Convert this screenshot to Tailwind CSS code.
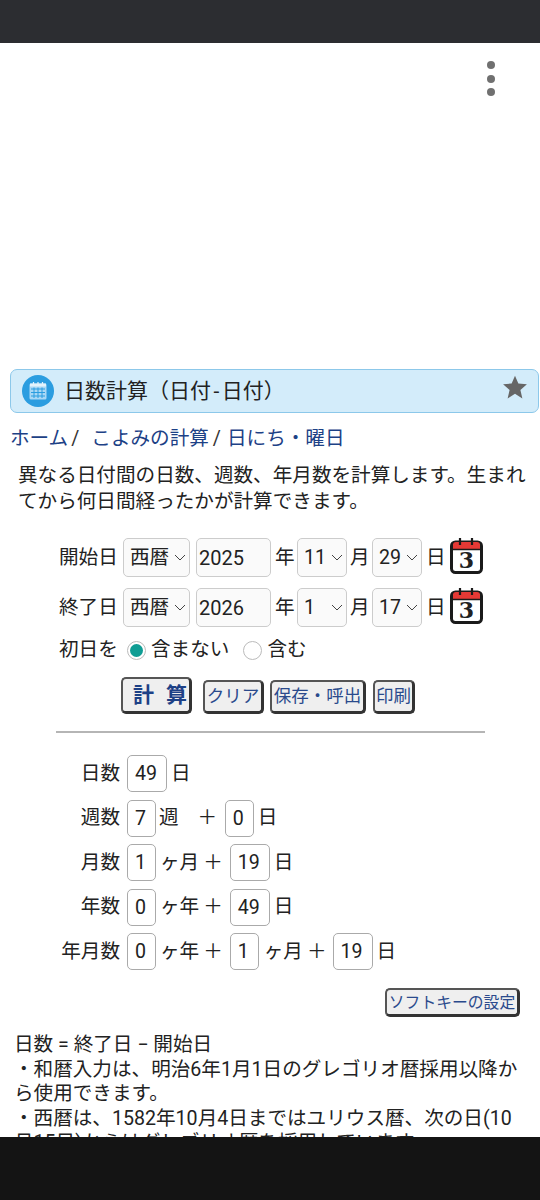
<!DOCTYPE html>
<html lang="ja">
<head>
    <meta charset="UTF-8">
    <meta name="viewport" content="width=device-width, initial-scale=1.0">
    <title>日数計算（日付-日付）</title>
    <script src="https://cdn.jsdelivr.net/npm/@tailwindcss/browser@4"></script>
</head>
<body class="bg-white w-[540px] h-[1200px] overflow-hidden flex flex-col text-[19.600px] text-[#222] font-['Roboto','Noto_Sans_CJK_JP',sans-serif]">
    <!-- status bar -->
    <div class="h-[43px] shrink-0 bg-[#2c2d31]"></div>

    <div class="flex-1 min-h-0 overflow-hidden">
        <!-- ad slot -->
        <div class="h-[326px] flex justify-end pt-[18px] pr-[45px]">
            <div class="flex flex-col gap-[5.500px]">
                <span class="w-[8px] h-[8px] rounded-full bg-[#707070]"></span>
                <span class="w-[8px] h-[8px] rounded-full bg-[#707070]"></span>
                <span class="w-[8px] h-[8px] rounded-full bg-[#707070]"></span>
            </div>
        </div>

        <!-- title -->
        <div class="ml-[10px] w-[529px] h-[44px] rounded-[7px] border border-[#8cc8ea] bg-[#d3ecfa] flex items-center pl-[11px] pr-[10px]">
            <svg class="w-[32px] h-[32px] shrink-0" viewBox="0 0 32 32">
                <circle cx="16" cy="16" r="16" fill="#2b9de0"/>
                <rect x="7.500" y="8.500" width="17" height="16" rx="1.500" fill="#a9d8f5"/>
                <rect x="8" y="8.500" width="16" height="3" fill="#e3f3fc"/>
                <path d="M11.500 7v3M16 7v3M20.500 7v3" stroke="#e3f3fc" stroke-width="1.200"/>
                <path d="M9 14h14M9 17.500h14M9 21h14M12 12.500v10.500M16 12.500v10.500M20 12.500v10.500" stroke="#2b9de0" stroke-width="1"/>
            </svg>
            <h1 class="ml-[10px] text-[21px] leading-none text-[#222] whitespace-nowrap">日数計算（日付<span class="px-[2.500px]">-</span>日付）</h1>
            <svg class="ml-auto w-[26px] h-[26px] mb-[9px]" viewBox="0 0 24 24">
                <path d="M12 1.500l3.100 7.300 7.900.7-6 5.200 1.800 7.800L12 18.300l-6.800 4.200L7 14.700 1 9.500l7.900-.7z" fill="#666"/>
            </svg>
        </div>

        <!-- breadcrumb -->
        <nav class="mt-[13px] ml-[10px] h-[26px] leading-[26px] text-[#1d4186] whitespace-nowrap">ホーム<span class="text-[#333] ml-[3px]">/</span><span class="ml-[12px]">こよみの計算</span><span class="text-[#333] ml-[4px]">/</span><span class="ml-[6px]">日にち・曜日</span></nav>

        <p class="mt-[11px] ml-[18px] w-[515px] leading-[26px]">異なる日付間の日数、週数、年月数を計算します。生まれてから何日間経ったかが計算できます。</p>

        <!-- date form -->
        <form class="mt-[23px] ml-[59px]">
            <div class="flex items-center h-[39px]">
                <span class="w-[64px]">開始日</span>
                <div class="relative">
                    <select class="appearance-none w-[67px] h-[39px] pl-[6px] rounded-[5px] border border-[#ccc] bg-[#fafafa]"><option>西暦</option></select>
                    <svg class="absolute right-[4px] top-[16px] w-[12px] h-[7px] pointer-events-none" viewBox="0 0 12 7" fill="none" stroke="#444" stroke-width="1"><path d="M1 1l5 5 5-5"/></svg>
                </div>
                <input class="ml-[6px] w-[75px] h-[39px] pl-[2px] text-[20px] rounded-[5px] border border-[#ccc] bg-[#fafafa]" value="2025">
                <span class="ml-[4px] w-[22px]">年</span>
                <div class="relative">
                    <select class="appearance-none w-[50px] h-[39px] pl-[6px] rounded-[5px] border border-[#ccc] bg-[#fafafa]"><option>11</option></select>
                    <svg class="absolute right-[4px] top-[16px] w-[12px] h-[7px] pointer-events-none" viewBox="0 0 12 7" fill="none" stroke="#444" stroke-width="1"><path d="M1 1l5 5 5-5"/></svg>
                </div>
                <span class="ml-[3px] w-[22px]">月</span>
                <div class="relative">
                    <select class="appearance-none w-[50px] h-[39px] pl-[6px] rounded-[5px] border border-[#ccc] bg-[#fafafa]"><option>29</option></select>
                    <svg class="absolute right-[4px] top-[16px] w-[12px] h-[7px] pointer-events-none" viewBox="0 0 12 7" fill="none" stroke="#444" stroke-width="1"><path d="M1 1l5 5 5-5"/></svg>
                </div>
                <span class="ml-[4px] w-[24px]">日</span>
                <svg class="w-[33px] h-[36px] mb-[4px]" viewBox="0 0 33 36">
                    <rect x="1.500" y="4" width="30" height="30.500" rx="4" fill="#fff" stroke="#1a1a1a" stroke-width="3"/>
                    <path d="M3 11V7a3 3 0 0 1 3-3h21a3 3 0 0 1 3 3v4z" fill="#e53935"/>
                    <path d="M3 11.500h27" stroke="#1a1a1a" stroke-width="1.500"/>
                    <path d="M10 0v7M22 0v7" stroke="#1a1a1a" stroke-width="2.200"/>
                    <text x="16.500" y="30" text-anchor="middle" font-family="'DejaVu Serif',serif" font-weight="700" font-size="22" fill="#222">3</text>
                </svg>
            </div>
            <div class="flex items-center h-[39px] mt-[11px]">
                <span class="w-[64px]">終了日</span>
                <div class="relative">
                    <select class="appearance-none w-[67px] h-[39px] pl-[6px] rounded-[5px] border border-[#ccc] bg-[#fafafa]"><option>西暦</option></select>
                    <svg class="absolute right-[4px] top-[16px] w-[12px] h-[7px] pointer-events-none" viewBox="0 0 12 7" fill="none" stroke="#444" stroke-width="1"><path d="M1 1l5 5 5-5"/></svg>
                </div>
                <input class="ml-[6px] w-[75px] h-[39px] pl-[2px] text-[20px] rounded-[5px] border border-[#ccc] bg-[#fafafa]" value="2026">
                <span class="ml-[4px] w-[22px]">年</span>
                <div class="relative">
                    <select class="appearance-none w-[50px] h-[39px] pl-[6px] rounded-[5px] border border-[#ccc] bg-[#fafafa]"><option>1</option></select>
                    <svg class="absolute right-[4px] top-[16px] w-[12px] h-[7px] pointer-events-none" viewBox="0 0 12 7" fill="none" stroke="#444" stroke-width="1"><path d="M1 1l5 5 5-5"/></svg>
                </div>
                <span class="ml-[3px] w-[22px]">月</span>
                <div class="relative">
                    <select class="appearance-none w-[50px] h-[39px] pl-[6px] rounded-[5px] border border-[#ccc] bg-[#fafafa]"><option>17</option></select>
                    <svg class="absolute right-[4px] top-[16px] w-[12px] h-[7px] pointer-events-none" viewBox="0 0 12 7" fill="none" stroke="#444" stroke-width="1"><path d="M1 1l5 5 5-5"/></svg>
                </div>
                <span class="ml-[4px] w-[24px]">日</span>
                <svg class="w-[33px] h-[36px] mb-[4px]" viewBox="0 0 33 36">
                    <rect x="1.500" y="4" width="30" height="30.500" rx="4" fill="#fff" stroke="#1a1a1a" stroke-width="3"/>
                    <path d="M3 11V7a3 3 0 0 1 3-3h21a3 3 0 0 1 3 3v4z" fill="#e53935"/>
                    <path d="M3 11.500h27" stroke="#1a1a1a" stroke-width="1.500"/>
                    <path d="M10 0v7M22 0v7" stroke="#1a1a1a" stroke-width="2.200"/>
                    <text x="16.500" y="30" text-anchor="middle" font-family="'DejaVu Serif',serif" font-weight="700" font-size="22" fill="#222">3</text>
                </svg>
            </div>
            <!-- radios -->
            <div class="flex items-center h-[24px] mt-[11px]">
                <span class="w-[68px]">初日を</span>
                <span class="w-[19px] h-[19px] rounded-full border border-[#bbb] flex items-center justify-center"><span class="w-[13px] h-[13px] rounded-full bg-[#0f9d94]"></span></span>
                <span class="ml-[5px]">含まない</span>
                <span class="ml-[14px] w-[19px] h-[19px] rounded-full border border-[#bbb]"></span>
                <span class="ml-[5px]">含む</span>
            </div>
            <!-- buttons -->
            <div class="flex items-end mt-[15px] ml-[62px]">
                <button type="button" class="w-[71px] h-[37px] pl-[10px] rounded-[5px] border-2 border-[#555] border-r-[3px] border-b-[3px] border-r-[#333] border-b-[#333] bg-[#efefef] text-[#1d4186] font-bold text-[21px] tracking-[12px] leading-none whitespace-nowrap">計算</button>
                <button type="button" class="ml-[11px] w-[61px] h-[34px] pt-[1px] rounded-[5px] border-2 border-[#555] border-r-[3px] border-b-[3px] border-r-[#333] border-b-[#333] bg-[#efefef] text-[#2a4a8c] text-[17.500px] leading-none whitespace-nowrap">クリア</button>
                <button type="button" class="ml-[6px] w-[96px] h-[34px] pt-[1px] rounded-[5px] border-2 border-[#555] border-r-[3px] border-b-[3px] border-r-[#333] border-b-[#333] bg-[#efefef] text-[#2a4a8c] text-[17.500px] leading-none whitespace-nowrap">保存・呼出</button>
                <button type="button" class="ml-[7px] w-[42px] h-[34px] pt-[1px] rounded-[5px] border-2 border-[#555] border-r-[3px] border-b-[3px] border-r-[#333] border-b-[#333] bg-[#efefef] text-[#2a4a8c] text-[17.500px] leading-none whitespace-nowrap">印刷</button>
            </div>
        </form>

        <hr class="mt-[17px] ml-[56px] w-[429px] border-t-2 border-[#b5b5b5]">

        <!-- results -->
        <div class="mt-[22px] flex flex-col gap-[7.500px] whitespace-nowrap">
            <div class="flex items-center h-[37px]">
                <span class="w-[120px] text-right">日数</span>
                <span class="ml-[7px] w-[40px] h-[37px] pl-[7px] leading-[35px] rounded-[5px] border border-[#aaa]">49</span>
                <span class="ml-[4px]">日</span>
            </div>
            <div class="flex items-center h-[37px]">
                <span class="w-[120px] text-right">週数</span>
                <span class="ml-[7px] w-[29px] h-[37px] pl-[7px] leading-[35px] rounded-[5px] border border-[#aaa]">7</span>
                <span class="ml-[3px]">週</span>
                <span class="ml-[19px]">＋</span>
                <span class="ml-[7.500px] w-[29px] h-[37px] pl-[7px] leading-[35px] rounded-[5px] border border-[#aaa]">0</span>
                <span class="ml-[4px]">日</span>
            </div>
            <div class="flex items-center h-[37px]">
                <span class="w-[120px] text-right">月数</span>
                <span class="ml-[7px] w-[29px] h-[37px] pl-[7px] leading-[35px] rounded-[5px] border border-[#aaa]">1</span>
                <span class="ml-[4px]">ヶ月</span>
                <span class="ml-[4px]">＋</span>
                <span class="ml-[7px] w-[40px] h-[37px] pl-[7px] leading-[35px] rounded-[5px] border border-[#aaa]">19</span>
                <span class="ml-[4px]">日</span>
            </div>
            <div class="flex items-center h-[37px]">
                <span class="w-[120px] text-right">年数</span>
                <span class="ml-[7px] w-[29px] h-[37px] pl-[7px] leading-[35px] rounded-[5px] border border-[#aaa]">0</span>
                <span class="ml-[4px]">ヶ年</span>
                <span class="ml-[4px]">＋</span>
                <span class="ml-[7px] w-[40px] h-[37px] pl-[7px] leading-[35px] rounded-[5px] border border-[#aaa]">49</span>
                <span class="ml-[4px]">日</span>
            </div>
            <div class="flex items-center h-[37px]">
                <span class="w-[120px] text-right">年月数</span>
                <span class="ml-[7px] w-[29px] h-[37px] pl-[7px] leading-[35px] rounded-[5px] border border-[#aaa]">0</span>
                <span class="ml-[4px]">ヶ年</span>
                <span class="ml-[4px]">＋</span>
                <span class="ml-[7px] w-[29px] h-[37px] pl-[7px] leading-[35px] rounded-[5px] border border-[#aaa]">1</span>
                <span class="ml-[5px]">ヶ月</span>
                <span class="ml-[4px]">＋</span>
                <span class="ml-[6px] w-[40px] h-[37px] pl-[7px] leading-[35px] rounded-[5px] border border-[#aaa]">19</span>
                <span class="ml-[4px]">日</span>
            </div>
        </div>

        <div class="mt-[18px] flex justify-end pr-[20px]">
            <button type="button" class="w-[135px] h-[29px] pt-[1px] rounded-[5px] border-2 border-[#555] border-r-[3px] border-b-[3px] border-r-[#333] border-b-[#333] bg-[#efefef] text-[#2a4a8c] text-[15.800px] leading-none whitespace-nowrap">ソフトキーの設定</button>
        </div>

        <!-- notes -->
        <div class="mt-[16px] mx-[14px] leading-[24.500px]">
            <p>日数 = 終了日 − 開始日</p>
            <p>・和暦入力は、明治6年1月1日のグレゴリオ暦採用以降から使用できます。</p>
            <p>・西暦は、1582年10月4日まではユリウス暦、次の日(10月15日)からはグレゴリオ暦を採用しています。</p>
        </div>
    </div>

    <!-- nav bar -->
    <div class="h-[63px] shrink-0 bg-[#141414]"></div>
</body>
</html>
